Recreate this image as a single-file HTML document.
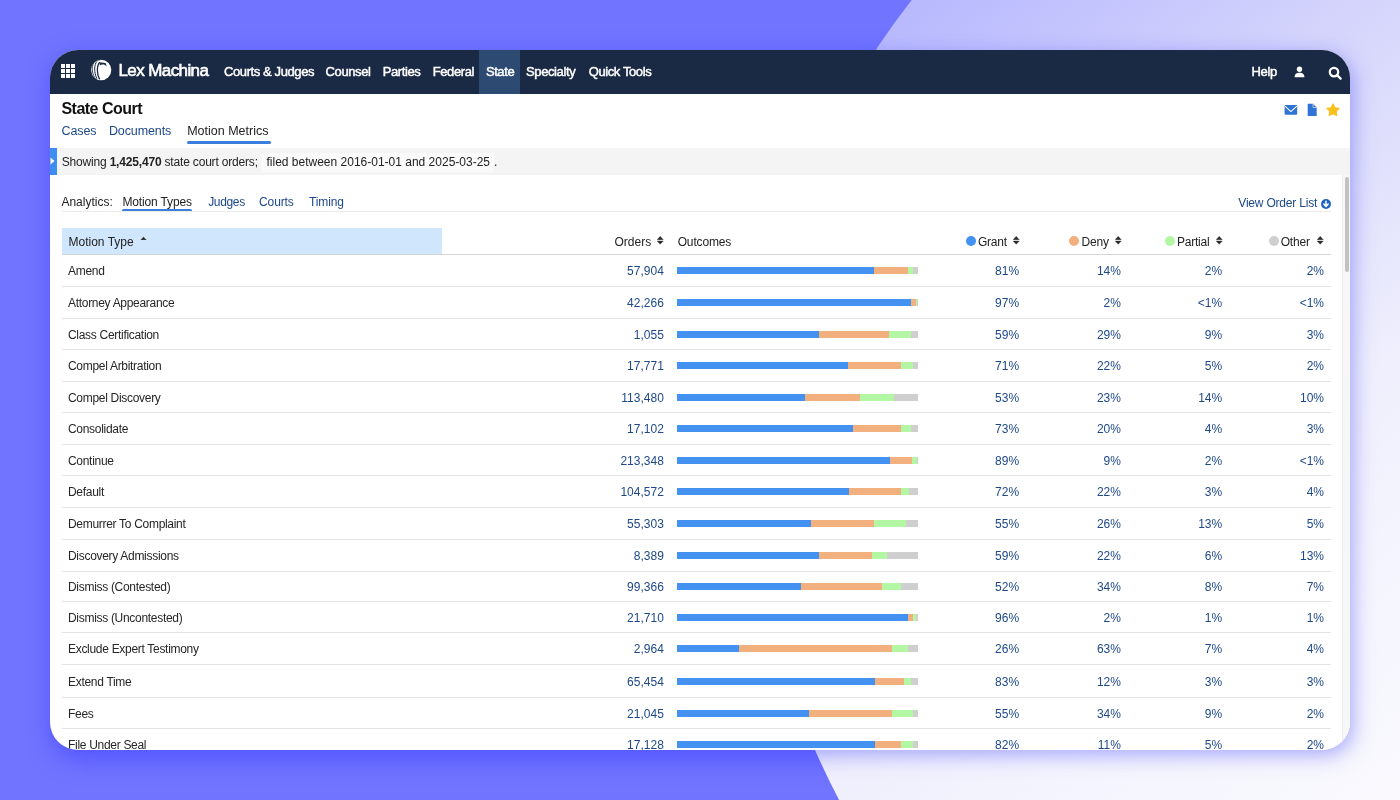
<!DOCTYPE html>
<html><head><meta charset="utf-8"><style>
html,body{margin:0;padding:0;width:1400px;height:800px;overflow:hidden;}
body{background:#7074fe;position:relative;font-family:"Liberation Sans",sans-serif;}
#shA{position:absolute;left:50px;top:50px;width:1300px;height:700px;border-radius:28px;box-shadow:2px 8px 24px rgba(60,62,255,0.6);}
#shB{position:absolute;left:50px;top:50px;width:1300px;height:700px;border-radius:28px;box-shadow:3px 5px 20px rgba(90,90,250,0.5);}
#circ{position:absolute;left:0;top:0;width:1400px;height:800px;clip-path:circle(738px at 1492px 456px);
background:linear-gradient(143deg,#b4b5fe 0%,#b9bafe 38%,#d5d5fc 56%,#efeffd 76%,#f4f4fe 85%,#f9f9fe 100%);}
#win{position:absolute;left:50px;top:50px;width:1300px;height:700px;border-radius:28px;overflow:hidden;background:#fff;will-change:transform;
}
.t{position:absolute;white-space:nowrap;}
.r{position:absolute;}
.bar{position:absolute;height:7px;display:flex;}
.bar i{display:block;height:100%;}
</style></head><body>
<div id="shA"></div>
<div id="circ"><div id="shB"></div></div>
<div id="win">
<div class="r" style="left:0.00px;top:0.00px;width:1300.00px;height:44.00px;background:#1b2a44;"></div>
<div class="r" style="left:429.00px;top:0.00px;width:41.00px;height:44.00px;background:#2c4a72;"></div>
<div class="r" style="left:10.70px;top:13.70px;width:4.20px;height:4.20px;background:#fff;"></div>
<div class="r" style="left:15.82px;top:13.70px;width:4.20px;height:4.20px;background:#fff;"></div>
<div class="r" style="left:20.94px;top:13.70px;width:4.20px;height:4.20px;background:#fff;"></div>
<div class="r" style="left:10.70px;top:18.82px;width:4.20px;height:4.20px;background:#fff;"></div>
<div class="r" style="left:15.82px;top:18.82px;width:4.20px;height:4.20px;background:#fff;"></div>
<div class="r" style="left:20.94px;top:18.82px;width:4.20px;height:4.20px;background:#fff;"></div>
<div class="r" style="left:10.70px;top:23.94px;width:4.20px;height:4.20px;background:#fff;"></div>
<div class="r" style="left:15.82px;top:23.94px;width:4.20px;height:4.20px;background:#fff;"></div>
<div class="r" style="left:20.94px;top:23.94px;width:4.20px;height:4.20px;background:#fff;"></div>
<svg class="r" style="left:36px;top:6px" width="30" height="28" viewBox="0 0 30 28">
<ellipse cx="15.1" cy="14" rx="10.2" ry="10.3" fill="#fff"/>
<path d="M8.6 5.6 C5.6 8.5 5.2 16 8.8 21.8" stroke="#1b2a44" stroke-width="0.9" fill="none"/>
<path d="M11 5.3 C8 8.6 7.8 16.5 11 22.8" stroke="#1b2a44" stroke-width="1" fill="none"/>
<path d="M13.8 6.2 C10.6 9.5 10.6 18 13.6 23.4" stroke="#1b2a44" stroke-width="1.3" fill="none"/>
<path d="M5.6 8.6 C4.2 11 4.3 15.5 5.8 18.5" stroke="#1b2a44" stroke-width="0.7" fill="none"/>
<path d="M13.6 6.6 C15.5 6.2 18 6.4 19.8 7.2 L20.6 10.6 C19.6 9 18.4 8.4 16.8 8.4 C15.6 8.4 14.6 8.9 13.9 9.6 Z" fill="#1b2a44"/>
<path d="M7.5 5.5 C9.5 4.4 12 4 14.5 4.3" stroke="#1b2a44" stroke-width="0.5" fill="none" opacity="0.7"/>
</svg>
<div class="t" style="left:68.50px;top:11.68px;font-size:17px;line-height:17px;font-weight:400;color:#fff;letter-spacing:-0.6px;-webkit-text-stroke:0.6px #fff">Lex Machina</div>
<div class="t" style="left:174.00px;top:14.70px;font-size:13px;line-height:13px;font-weight:400;color:#fff;letter-spacing:-0.4px;-webkit-text-stroke:0.45px #fff">Courts &amp; Judges</div>
<div class="t" style="left:275.60px;top:14.70px;font-size:13px;line-height:13px;font-weight:400;color:#fff;letter-spacing:-0.4px;-webkit-text-stroke:0.45px #fff">Counsel</div>
<div class="t" style="left:332.70px;top:14.70px;font-size:13px;line-height:13px;font-weight:400;color:#fff;letter-spacing:-0.4px;-webkit-text-stroke:0.45px #fff">Parties</div>
<div class="t" style="left:382.70px;top:14.70px;font-size:13px;line-height:13px;font-weight:400;color:#fff;letter-spacing:-0.4px;-webkit-text-stroke:0.45px #fff">Federal</div>
<div class="t" style="left:435.90px;top:14.70px;font-size:13px;line-height:13px;font-weight:400;color:#fff;letter-spacing:-0.4px;-webkit-text-stroke:0.45px #fff">State</div>
<div class="t" style="left:476.10px;top:14.70px;font-size:13px;line-height:13px;font-weight:400;color:#fff;letter-spacing:-0.4px;-webkit-text-stroke:0.45px #fff">Specialty</div>
<div class="t" style="left:538.70px;top:14.70px;font-size:13px;line-height:13px;font-weight:400;color:#fff;letter-spacing:-0.4px;-webkit-text-stroke:0.45px #fff">Quick Tools</div>
<div class="t" style="left:1201.40px;top:14.70px;font-size:13px;line-height:13px;font-weight:400;color:#fff;letter-spacing:-0.3px;-webkit-text-stroke:0.45px #fff">Help</div>
<svg class="r" style="left:1244px;top:16px" width="11" height="12" viewBox="0 0 11 12">
<circle cx="5.5" cy="3.2" r="2.7" fill="#fff"/>
<path d="M0.6 11.3 C0.6 8 2.6 6.8 5.5 6.8 C8.4 6.8 10.4 8 10.4 11.3 Z" fill="#fff"/>
</svg>
<svg class="r" style="left:1278px;top:15.5px" width="15" height="14" viewBox="0 0 15 14">
<circle cx="6" cy="6.1" r="4.2" stroke="#fff" stroke-width="2.3" fill="none"/>
<path d="M9.3 9.4 L12.6 12.6" stroke="#fff" stroke-width="2.3" stroke-linecap="round"/>
</svg>
<div class="t" style="left:11.40px;top:51.01px;font-size:16px;line-height:16px;font-weight:700;color:#111;letter-spacing:-0.5px">State Court</div>
<div class="t" style="left:11.60px;top:74.82px;font-size:12.5px;line-height:12.5px;font-weight:400;color:#1d4889;letter-spacing:-0.1px">Cases</div>
<div class="t" style="left:58.90px;top:74.82px;font-size:12.5px;line-height:12.5px;font-weight:400;color:#1d4889;letter-spacing:-0.1px">Documents</div>
<div class="t" style="left:137.20px;top:74.82px;font-size:12.5px;line-height:12.5px;font-weight:400;color:#222;letter-spacing:0px">Motion Metrics</div>
<div class="r" style="left:137.00px;top:90.80px;width:84.00px;height:2.80px;background:#3a7fde;border-radius:1.5px"></div>
<svg class="r" style="left:1234px;top:54px" width="14" height="12" viewBox="0 0 14 12">
<rect x="0.6" y="1" width="12.6" height="9.8" rx="1.2" fill="#2f73d6"/>
<path d="M0.9 2.2 L6.9 7.6 L12.9 2.2" stroke="#fff" stroke-width="1.1" fill="none"/>
</svg>
<svg class="r" style="left:1256.5px;top:53px" width="10" height="13" viewBox="0 0 10 13">
<path d="M0.7 0.8 H6.3 L9.7 4.2 V12.9 H0.7 Z" fill="#2f73d6"/>
<path d="M6.1 0.8 V4.4 H9.7 Z" fill="#1d4f9e" stroke="#fff" stroke-width="0.7"/>
</svg>
<svg class="r" style="left:1276px;top:52.5px" width="14" height="14" viewBox="0 0 24 24">
<path d="M12.00 1.60 L15.29 8.07 L22.46 9.20 L17.33 14.33 L18.47 21.50 L12.00 18.20 L5.53 21.50 L6.67 14.33 L1.54 9.20 L8.71 8.07 Z" fill="#fbc01c" stroke="#fbc01c" stroke-width="2" stroke-linejoin="round"/>
</svg>
<div class="r" style="left:0.00px;top:98.00px;width:1300.00px;height:26.60px;background:#f4f4f4;"></div>
<div class="r" style="left:0.00px;top:98.00px;width:7.00px;height:26.60px;background:#3d8ef0;"></div>
<svg class="r" style="left:0px;top:106px" width="7" height="10" viewBox="0 0 7 10"><path d="M0.5 1.5 L4.5 5 L0.5 8.5 Z" fill="#fff"/></svg>
<div class="t" style="left:11.70px;top:106.03px;font-size:12px;line-height:12px;font-weight:400;color:#222;letter-spacing:-0.18px">Showing <b>1,425,470</b> state court orders;</div>
<div class="r" style="left:211.00px;top:102.50px;width:233.00px;height:19.80px;background:#fafafa;border-radius:2px"></div>
<div class="t" style="left:216.50px;top:106.03px;font-size:12px;line-height:12px;font-weight:400;color:#222;">filed between 2016-01-01 and 2025-03-25</div>
<div class="t" style="left:444.00px;top:106.03px;font-size:12px;line-height:12px;font-weight:400;color:#222;">.</div>
<div class="t" style="left:11.40px;top:146.03px;font-size:12px;line-height:12px;font-weight:400;color:#222;">Analytics:</div>
<div class="t" style="left:72.50px;top:146.03px;font-size:12px;line-height:12px;font-weight:400;color:#222;letter-spacing:-0.15px">Motion Types</div>
<div class="r" style="left:72.20px;top:159.00px;width:70.00px;height:2.70px;background:#3a7fde;border-radius:1.5px"></div>
<div class="t" style="left:158.20px;top:146.03px;font-size:12px;line-height:12px;font-weight:400;color:#1d4889;letter-spacing:-0.35px">Judges</div>
<div class="t" style="left:209.00px;top:146.03px;font-size:12px;line-height:12px;font-weight:400;color:#1d4889;letter-spacing:-0.1px">Courts</div>
<div class="t" style="left:258.90px;top:146.03px;font-size:12px;line-height:12px;font-weight:400;color:#1d4889;letter-spacing:-0.1px">Timing</div>
<div class="r" style="left:11.00px;top:161.00px;width:1270.00px;height:1.00px;background:#ebebeb;"></div>
<div class="t" style="left:1188.30px;top:147.13px;font-size:12px;line-height:12px;font-weight:400;color:#1d4889;letter-spacing:-0.2px">View Order List</div>
<svg class="r" style="left:1270.5px;top:148.5px" width="10" height="10" viewBox="0 0 10 10">
<circle cx="5" cy="5" r="5" fill="#1f62c4"/>
<path d="M5 2.2 V7.2 M2.8 5 L5 7.4 L7.2 5" stroke="#fff" stroke-width="1.5" fill="none" stroke-linecap="round" stroke-linejoin="round"/>
</svg>
<div class="r" style="left:11.50px;top:178.00px;width:380.50px;height:26.00px;background:#d0e6fd;"></div>
<div class="t" style="left:18.50px;top:185.73px;font-size:12px;line-height:12px;font-weight:400;color:#222;">Motion Type</div>
<svg class="r" style="left:89.5px;top:186px" width="7" height="5" viewBox="0 0 7 5"><path d="M0.5 4 L3.5 0.8 L6.5 4 Z" fill="#333"/></svg>
<div class="t" style="right:698.80px;top:185.73px;font-size:12px;line-height:12px;font-weight:400;color:#222;">Orders</div>
<svg class="r" style="left:607px;top:186.3px" width="7" height="9" viewBox="0 0 7 9"><path d="M0.1 3.7 L3.2 0.3 L6.3 3.7 Z M0.1 5.1 L3.2 8.3 L6.3 5.1 Z" fill="#2a2a2a" stroke="#2a2a2a" stroke-width="0.3" stroke-linejoin="round"/></svg>
<div class="t" style="left:627.70px;top:185.73px;font-size:12px;line-height:12px;font-weight:400;color:#222;letter-spacing:-0.15px">Outcomes</div>
<div class="r" style="left:915.50px;top:186.00px;width:10.20px;height:10.20px;background:#4392f1;border-radius:50%"></div>
<div class="t" style="left:927.90px;top:185.73px;font-size:12px;line-height:12px;font-weight:400;color:#222;letter-spacing:-0.2px">Grant</div>
<svg class="r" style="left:962.5px;top:186.3px" width="7" height="9" viewBox="0 0 7 9"><path d="M0.1 3.7 L3.2 0.3 L6.3 3.7 Z M0.1 5.1 L3.2 8.3 L6.3 5.1 Z" fill="#2a2a2a" stroke="#2a2a2a" stroke-width="0.3" stroke-linejoin="round"/></svg>
<div class="r" style="left:1019.00px;top:186.00px;width:10.20px;height:10.20px;background:#f3b07f;border-radius:50%"></div>
<div class="t" style="left:1031.60px;top:185.73px;font-size:12px;line-height:12px;font-weight:400;color:#222;letter-spacing:-0.2px">Deny</div>
<svg class="r" style="left:1064.5px;top:186.3px" width="7" height="9" viewBox="0 0 7 9"><path d="M0.1 3.7 L3.2 0.3 L6.3 3.7 Z M0.1 5.1 L3.2 8.3 L6.3 5.1 Z" fill="#2a2a2a" stroke="#2a2a2a" stroke-width="0.3" stroke-linejoin="round"/></svg>
<div class="r" style="left:1114.60px;top:186.00px;width:10.20px;height:10.20px;background:#b3f7a4;border-radius:50%"></div>
<div class="t" style="left:1126.90px;top:185.73px;font-size:12px;line-height:12px;font-weight:400;color:#222;letter-spacing:-0.2px">Partial</div>
<svg class="r" style="left:1165.5px;top:186.3px" width="7" height="9" viewBox="0 0 7 9"><path d="M0.1 3.7 L3.2 0.3 L6.3 3.7 Z M0.1 5.1 L3.2 8.3 L6.3 5.1 Z" fill="#2a2a2a" stroke="#2a2a2a" stroke-width="0.3" stroke-linejoin="round"/></svg>
<div class="r" style="left:1218.80px;top:186.00px;width:10.20px;height:10.20px;background:#cfcfcf;border-radius:50%"></div>
<div class="t" style="left:1230.70px;top:185.73px;font-size:12px;line-height:12px;font-weight:400;color:#222;letter-spacing:-0.2px">Other</div>
<svg class="r" style="left:1267px;top:186.3px" width="7" height="9" viewBox="0 0 7 9"><path d="M0.1 3.7 L3.2 0.3 L6.3 3.7 Z M0.1 5.1 L3.2 8.3 L6.3 5.1 Z" fill="#2a2a2a" stroke="#2a2a2a" stroke-width="0.3" stroke-linejoin="round"/></svg>
<div class="r" style="left:11.50px;top:204.00px;width:1269.50px;height:1.00px;background:#d5d5d5;"></div>
<div class="t" style="left:18.00px;top:215.43px;font-size:12px;line-height:12px;font-weight:400;color:#262626;letter-spacing:-0.3px">Amend</div>
<div class="t" style="right:686.20px;top:215.43px;font-size:12px;line-height:12px;font-weight:400;color:#1d4889;">57,904</div>
<div class="bar" style="left:626.70px;top:217.00px;width:241.4px"><i style="width:197.51px;background:#4392f1"></i><i style="width:34.14px;background:#f3b07f"></i><i style="width:4.88px;background:#b3f7a4"></i><i style="width:4.88px;background:#cfcfcf"></i></div>
<div class="t" style="right:330.90px;top:215.43px;font-size:12px;line-height:12px;font-weight:400;color:#1d4889;">81%</div>
<div class="t" style="right:229.10px;top:215.43px;font-size:12px;line-height:12px;font-weight:400;color:#1d4889;">14%</div>
<div class="t" style="right:127.80px;top:215.43px;font-size:12px;line-height:12px;font-weight:400;color:#1d4889;">2%</div>
<div class="t" style="right:26.00px;top:215.43px;font-size:12px;line-height:12px;font-weight:400;color:#1d4889;">2%</div>
<div class="r" style="left:11.50px;top:236.00px;width:1269.50px;height:1.00px;background:#e3e3e3;"></div>
<div class="t" style="left:18.00px;top:247.43px;font-size:12px;line-height:12px;font-weight:400;color:#262626;letter-spacing:-0.3px">Attorney Appearance</div>
<div class="t" style="right:686.20px;top:247.43px;font-size:12px;line-height:12px;font-weight:400;color:#1d4889;">42,266</div>
<div class="bar" style="left:626.70px;top:249.00px;width:241.4px"><i style="width:234.16px;background:#4392f1"></i><i style="width:4.83px;background:#f3b07f"></i><i style="width:1.21px;background:#b3f7a4"></i><i style="width:1.21px;background:#cfcfcf"></i></div>
<div class="t" style="right:330.90px;top:247.43px;font-size:12px;line-height:12px;font-weight:400;color:#1d4889;">97%</div>
<div class="t" style="right:229.10px;top:247.43px;font-size:12px;line-height:12px;font-weight:400;color:#1d4889;">2%</div>
<div class="t" style="right:127.80px;top:247.43px;font-size:12px;line-height:12px;font-weight:400;color:#1d4889;">&lt;1%</div>
<div class="t" style="right:26.00px;top:247.43px;font-size:12px;line-height:12px;font-weight:400;color:#1d4889;">&lt;1%</div>
<div class="r" style="left:11.50px;top:268.00px;width:1269.50px;height:1.00px;background:#e3e3e3;"></div>
<div class="t" style="left:18.00px;top:278.93px;font-size:12px;line-height:12px;font-weight:400;color:#262626;letter-spacing:-0.3px">Class Certification</div>
<div class="t" style="right:686.20px;top:278.93px;font-size:12px;line-height:12px;font-weight:400;color:#1d4889;">1,055</div>
<div class="bar" style="left:626.70px;top:280.50px;width:241.4px"><i style="width:142.43px;background:#4392f1"></i><i style="width:70.01px;background:#f3b07f"></i><i style="width:21.73px;background:#b3f7a4"></i><i style="width:7.24px;background:#cfcfcf"></i></div>
<div class="t" style="right:330.90px;top:278.93px;font-size:12px;line-height:12px;font-weight:400;color:#1d4889;">59%</div>
<div class="t" style="right:229.10px;top:278.93px;font-size:12px;line-height:12px;font-weight:400;color:#1d4889;">29%</div>
<div class="t" style="right:127.80px;top:278.93px;font-size:12px;line-height:12px;font-weight:400;color:#1d4889;">9%</div>
<div class="t" style="right:26.00px;top:278.93px;font-size:12px;line-height:12px;font-weight:400;color:#1d4889;">3%</div>
<div class="r" style="left:11.50px;top:299.00px;width:1269.50px;height:1.00px;background:#e3e3e3;"></div>
<div class="t" style="left:18.00px;top:310.43px;font-size:12px;line-height:12px;font-weight:400;color:#262626;letter-spacing:-0.3px">Compel Arbitration</div>
<div class="t" style="right:686.20px;top:310.43px;font-size:12px;line-height:12px;font-weight:400;color:#1d4889;">17,771</div>
<div class="bar" style="left:626.70px;top:312.00px;width:241.4px"><i style="width:171.39px;background:#4392f1"></i><i style="width:53.11px;background:#f3b07f"></i><i style="width:12.07px;background:#b3f7a4"></i><i style="width:4.83px;background:#cfcfcf"></i></div>
<div class="t" style="right:330.90px;top:310.43px;font-size:12px;line-height:12px;font-weight:400;color:#1d4889;">71%</div>
<div class="t" style="right:229.10px;top:310.43px;font-size:12px;line-height:12px;font-weight:400;color:#1d4889;">22%</div>
<div class="t" style="right:127.80px;top:310.43px;font-size:12px;line-height:12px;font-weight:400;color:#1d4889;">5%</div>
<div class="t" style="right:26.00px;top:310.43px;font-size:12px;line-height:12px;font-weight:400;color:#1d4889;">2%</div>
<div class="r" style="left:11.50px;top:331.00px;width:1269.50px;height:1.00px;background:#e3e3e3;"></div>
<div class="t" style="left:18.00px;top:341.93px;font-size:12px;line-height:12px;font-weight:400;color:#262626;letter-spacing:-0.3px">Compel Discovery</div>
<div class="t" style="right:686.20px;top:341.93px;font-size:12px;line-height:12px;font-weight:400;color:#1d4889;">113,480</div>
<div class="bar" style="left:626.70px;top:343.50px;width:241.4px"><i style="width:127.94px;background:#4392f1"></i><i style="width:55.52px;background:#f3b07f"></i><i style="width:33.80px;background:#b3f7a4"></i><i style="width:24.14px;background:#cfcfcf"></i></div>
<div class="t" style="right:330.90px;top:341.93px;font-size:12px;line-height:12px;font-weight:400;color:#1d4889;">53%</div>
<div class="t" style="right:229.10px;top:341.93px;font-size:12px;line-height:12px;font-weight:400;color:#1d4889;">23%</div>
<div class="t" style="right:127.80px;top:341.93px;font-size:12px;line-height:12px;font-weight:400;color:#1d4889;">14%</div>
<div class="t" style="right:26.00px;top:341.93px;font-size:12px;line-height:12px;font-weight:400;color:#1d4889;">10%</div>
<div class="r" style="left:11.50px;top:362.00px;width:1269.50px;height:1.00px;background:#e3e3e3;"></div>
<div class="t" style="left:18.00px;top:373.43px;font-size:12px;line-height:12px;font-weight:400;color:#262626;letter-spacing:-0.3px">Consolidate</div>
<div class="t" style="right:686.20px;top:373.43px;font-size:12px;line-height:12px;font-weight:400;color:#1d4889;">17,102</div>
<div class="bar" style="left:626.70px;top:375.00px;width:241.4px"><i style="width:176.22px;background:#4392f1"></i><i style="width:48.28px;background:#f3b07f"></i><i style="width:9.66px;background:#b3f7a4"></i><i style="width:7.24px;background:#cfcfcf"></i></div>
<div class="t" style="right:330.90px;top:373.43px;font-size:12px;line-height:12px;font-weight:400;color:#1d4889;">73%</div>
<div class="t" style="right:229.10px;top:373.43px;font-size:12px;line-height:12px;font-weight:400;color:#1d4889;">20%</div>
<div class="t" style="right:127.80px;top:373.43px;font-size:12px;line-height:12px;font-weight:400;color:#1d4889;">4%</div>
<div class="t" style="right:26.00px;top:373.43px;font-size:12px;line-height:12px;font-weight:400;color:#1d4889;">3%</div>
<div class="r" style="left:11.50px;top:394.00px;width:1269.50px;height:1.00px;background:#e3e3e3;"></div>
<div class="t" style="left:18.00px;top:404.93px;font-size:12px;line-height:12px;font-weight:400;color:#262626;letter-spacing:-0.3px">Continue</div>
<div class="t" style="right:686.20px;top:404.93px;font-size:12px;line-height:12px;font-weight:400;color:#1d4889;">213,348</div>
<div class="bar" style="left:626.70px;top:406.50px;width:241.4px"><i style="width:213.78px;background:#4392f1"></i><i style="width:21.62px;background:#f3b07f"></i><i style="width:4.80px;background:#b3f7a4"></i><i style="width:1.20px;background:#cfcfcf"></i></div>
<div class="t" style="right:330.90px;top:404.93px;font-size:12px;line-height:12px;font-weight:400;color:#1d4889;">89%</div>
<div class="t" style="right:229.10px;top:404.93px;font-size:12px;line-height:12px;font-weight:400;color:#1d4889;">9%</div>
<div class="t" style="right:127.80px;top:404.93px;font-size:12px;line-height:12px;font-weight:400;color:#1d4889;">2%</div>
<div class="t" style="right:26.00px;top:404.93px;font-size:12px;line-height:12px;font-weight:400;color:#1d4889;">&lt;1%</div>
<div class="r" style="left:11.50px;top:425.00px;width:1269.50px;height:1.00px;background:#e3e3e3;"></div>
<div class="t" style="left:18.00px;top:436.43px;font-size:12px;line-height:12px;font-weight:400;color:#262626;letter-spacing:-0.3px">Default</div>
<div class="t" style="right:686.20px;top:436.43px;font-size:12px;line-height:12px;font-weight:400;color:#1d4889;">104,572</div>
<div class="bar" style="left:626.70px;top:438.00px;width:241.4px"><i style="width:172.09px;background:#4392f1"></i><i style="width:52.58px;background:#f3b07f"></i><i style="width:7.17px;background:#b3f7a4"></i><i style="width:9.56px;background:#cfcfcf"></i></div>
<div class="t" style="right:330.90px;top:436.43px;font-size:12px;line-height:12px;font-weight:400;color:#1d4889;">72%</div>
<div class="t" style="right:229.10px;top:436.43px;font-size:12px;line-height:12px;font-weight:400;color:#1d4889;">22%</div>
<div class="t" style="right:127.80px;top:436.43px;font-size:12px;line-height:12px;font-weight:400;color:#1d4889;">3%</div>
<div class="t" style="right:26.00px;top:436.43px;font-size:12px;line-height:12px;font-weight:400;color:#1d4889;">4%</div>
<div class="r" style="left:11.50px;top:457.00px;width:1269.50px;height:1.00px;background:#e3e3e3;"></div>
<div class="t" style="left:18.00px;top:468.43px;font-size:12px;line-height:12px;font-weight:400;color:#262626;letter-spacing:-0.3px">Demurrer To Complaint</div>
<div class="t" style="right:686.20px;top:468.43px;font-size:12px;line-height:12px;font-weight:400;color:#1d4889;">55,303</div>
<div class="bar" style="left:626.70px;top:470.00px;width:241.4px"><i style="width:134.11px;background:#4392f1"></i><i style="width:63.40px;background:#f3b07f"></i><i style="width:31.70px;background:#b3f7a4"></i><i style="width:12.19px;background:#cfcfcf"></i></div>
<div class="t" style="right:330.90px;top:468.43px;font-size:12px;line-height:12px;font-weight:400;color:#1d4889;">55%</div>
<div class="t" style="right:229.10px;top:468.43px;font-size:12px;line-height:12px;font-weight:400;color:#1d4889;">26%</div>
<div class="t" style="right:127.80px;top:468.43px;font-size:12px;line-height:12px;font-weight:400;color:#1d4889;">13%</div>
<div class="t" style="right:26.00px;top:468.43px;font-size:12px;line-height:12px;font-weight:400;color:#1d4889;">5%</div>
<div class="r" style="left:11.50px;top:489.00px;width:1269.50px;height:1.00px;background:#e3e3e3;"></div>
<div class="t" style="left:18.00px;top:500.43px;font-size:12px;line-height:12px;font-weight:400;color:#262626;letter-spacing:-0.3px">Discovery Admissions</div>
<div class="t" style="right:686.20px;top:500.43px;font-size:12px;line-height:12px;font-weight:400;color:#1d4889;">8,389</div>
<div class="bar" style="left:626.70px;top:502.00px;width:241.4px"><i style="width:142.43px;background:#4392f1"></i><i style="width:53.11px;background:#f3b07f"></i><i style="width:14.48px;background:#b3f7a4"></i><i style="width:31.38px;background:#cfcfcf"></i></div>
<div class="t" style="right:330.90px;top:500.43px;font-size:12px;line-height:12px;font-weight:400;color:#1d4889;">59%</div>
<div class="t" style="right:229.10px;top:500.43px;font-size:12px;line-height:12px;font-weight:400;color:#1d4889;">22%</div>
<div class="t" style="right:127.80px;top:500.43px;font-size:12px;line-height:12px;font-weight:400;color:#1d4889;">6%</div>
<div class="t" style="right:26.00px;top:500.43px;font-size:12px;line-height:12px;font-weight:400;color:#1d4889;">13%</div>
<div class="r" style="left:11.50px;top:521.00px;width:1269.50px;height:1.00px;background:#e3e3e3;"></div>
<div class="t" style="left:18.00px;top:531.43px;font-size:12px;line-height:12px;font-weight:400;color:#262626;letter-spacing:-0.3px">Dismiss (Contested)</div>
<div class="t" style="right:686.20px;top:531.43px;font-size:12px;line-height:12px;font-weight:400;color:#1d4889;">99,366</div>
<div class="bar" style="left:626.70px;top:533.00px;width:241.4px"><i style="width:124.29px;background:#4392f1"></i><i style="width:81.26px;background:#f3b07f"></i><i style="width:19.12px;background:#b3f7a4"></i><i style="width:16.73px;background:#cfcfcf"></i></div>
<div class="t" style="right:330.90px;top:531.43px;font-size:12px;line-height:12px;font-weight:400;color:#1d4889;">52%</div>
<div class="t" style="right:229.10px;top:531.43px;font-size:12px;line-height:12px;font-weight:400;color:#1d4889;">34%</div>
<div class="t" style="right:127.80px;top:531.43px;font-size:12px;line-height:12px;font-weight:400;color:#1d4889;">8%</div>
<div class="t" style="right:26.00px;top:531.43px;font-size:12px;line-height:12px;font-weight:400;color:#1d4889;">7%</div>
<div class="r" style="left:11.50px;top:551.00px;width:1269.50px;height:1.00px;background:#e3e3e3;"></div>
<div class="t" style="left:18.00px;top:561.93px;font-size:12px;line-height:12px;font-weight:400;color:#262626;letter-spacing:-0.3px">Dismiss (Uncontested)</div>
<div class="t" style="right:686.20px;top:561.93px;font-size:12px;line-height:12px;font-weight:400;color:#1d4889;">21,710</div>
<div class="bar" style="left:626.70px;top:563.50px;width:241.4px"><i style="width:231.74px;background:#4392f1"></i><i style="width:4.83px;background:#f3b07f"></i><i style="width:2.41px;background:#b3f7a4"></i><i style="width:2.41px;background:#cfcfcf"></i></div>
<div class="t" style="right:330.90px;top:561.93px;font-size:12px;line-height:12px;font-weight:400;color:#1d4889;">96%</div>
<div class="t" style="right:229.10px;top:561.93px;font-size:12px;line-height:12px;font-weight:400;color:#1d4889;">2%</div>
<div class="t" style="right:127.80px;top:561.93px;font-size:12px;line-height:12px;font-weight:400;color:#1d4889;">1%</div>
<div class="t" style="right:26.00px;top:561.93px;font-size:12px;line-height:12px;font-weight:400;color:#1d4889;">1%</div>
<div class="r" style="left:11.50px;top:582.00px;width:1269.50px;height:1.00px;background:#e3e3e3;"></div>
<div class="t" style="left:18.00px;top:593.43px;font-size:12px;line-height:12px;font-weight:400;color:#262626;letter-spacing:-0.3px">Exclude Expert Testimony</div>
<div class="t" style="right:686.20px;top:593.43px;font-size:12px;line-height:12px;font-weight:400;color:#1d4889;">2,964</div>
<div class="bar" style="left:626.70px;top:595.00px;width:241.4px"><i style="width:62.76px;background:#4392f1"></i><i style="width:152.08px;background:#f3b07f"></i><i style="width:16.90px;background:#b3f7a4"></i><i style="width:9.66px;background:#cfcfcf"></i></div>
<div class="t" style="right:330.90px;top:593.43px;font-size:12px;line-height:12px;font-weight:400;color:#1d4889;">26%</div>
<div class="t" style="right:229.10px;top:593.43px;font-size:12px;line-height:12px;font-weight:400;color:#1d4889;">63%</div>
<div class="t" style="right:127.80px;top:593.43px;font-size:12px;line-height:12px;font-weight:400;color:#1d4889;">7%</div>
<div class="t" style="right:26.00px;top:593.43px;font-size:12px;line-height:12px;font-weight:400;color:#1d4889;">4%</div>
<div class="r" style="left:11.50px;top:614.00px;width:1269.50px;height:1.00px;background:#e3e3e3;"></div>
<div class="t" style="left:18.00px;top:625.93px;font-size:12px;line-height:12px;font-weight:400;color:#262626;letter-spacing:-0.3px">Extend Time</div>
<div class="t" style="right:686.20px;top:625.93px;font-size:12px;line-height:12px;font-weight:400;color:#1d4889;">65,454</div>
<div class="bar" style="left:626.70px;top:627.50px;width:241.4px"><i style="width:198.38px;background:#4392f1"></i><i style="width:28.68px;background:#f3b07f"></i><i style="width:7.17px;background:#b3f7a4"></i><i style="width:7.17px;background:#cfcfcf"></i></div>
<div class="t" style="right:330.90px;top:625.93px;font-size:12px;line-height:12px;font-weight:400;color:#1d4889;">83%</div>
<div class="t" style="right:229.10px;top:625.93px;font-size:12px;line-height:12px;font-weight:400;color:#1d4889;">12%</div>
<div class="t" style="right:127.80px;top:625.93px;font-size:12px;line-height:12px;font-weight:400;color:#1d4889;">3%</div>
<div class="t" style="right:26.00px;top:625.93px;font-size:12px;line-height:12px;font-weight:400;color:#1d4889;">3%</div>
<div class="r" style="left:11.50px;top:647.00px;width:1269.50px;height:1.00px;background:#e3e3e3;"></div>
<div class="t" style="left:18.00px;top:657.93px;font-size:12px;line-height:12px;font-weight:400;color:#262626;letter-spacing:-0.3px">Fees</div>
<div class="t" style="right:686.20px;top:657.93px;font-size:12px;line-height:12px;font-weight:400;color:#1d4889;">21,045</div>
<div class="bar" style="left:626.70px;top:659.50px;width:241.4px"><i style="width:132.77px;background:#4392f1"></i><i style="width:82.08px;background:#f3b07f"></i><i style="width:21.73px;background:#b3f7a4"></i><i style="width:4.83px;background:#cfcfcf"></i></div>
<div class="t" style="right:330.90px;top:657.93px;font-size:12px;line-height:12px;font-weight:400;color:#1d4889;">55%</div>
<div class="t" style="right:229.10px;top:657.93px;font-size:12px;line-height:12px;font-weight:400;color:#1d4889;">34%</div>
<div class="t" style="right:127.80px;top:657.93px;font-size:12px;line-height:12px;font-weight:400;color:#1d4889;">9%</div>
<div class="t" style="right:26.00px;top:657.93px;font-size:12px;line-height:12px;font-weight:400;color:#1d4889;">2%</div>
<div class="r" style="left:11.50px;top:678.00px;width:1269.50px;height:1.00px;background:#e3e3e3;"></div>
<div class="t" style="left:18.00px;top:688.93px;font-size:12px;line-height:12px;font-weight:400;color:#262626;letter-spacing:-0.3px">File Under Seal</div>
<div class="t" style="right:686.20px;top:688.93px;font-size:12px;line-height:12px;font-weight:400;color:#1d4889;">17,128</div>
<div class="bar" style="left:626.70px;top:690.50px;width:241.4px"><i style="width:197.95px;background:#4392f1"></i><i style="width:26.55px;background:#f3b07f"></i><i style="width:12.07px;background:#b3f7a4"></i><i style="width:4.83px;background:#cfcfcf"></i></div>
<div class="t" style="right:330.90px;top:688.93px;font-size:12px;line-height:12px;font-weight:400;color:#1d4889;">82%</div>
<div class="t" style="right:229.10px;top:688.93px;font-size:12px;line-height:12px;font-weight:400;color:#1d4889;">11%</div>
<div class="t" style="right:127.80px;top:688.93px;font-size:12px;line-height:12px;font-weight:400;color:#1d4889;">5%</div>
<div class="t" style="right:26.00px;top:688.93px;font-size:12px;line-height:12px;font-weight:400;color:#1d4889;">2%</div>
<div class="r" style="left:1292.00px;top:125.00px;width:8.00px;height:575.00px;background:#f7f7f7;border-left:1px solid #ededed;box-sizing:border-box"></div>
<div class="r" style="left:1294.80px;top:127.00px;width:4.60px;height:95.00px;background:#c2c2c2;border-radius:3px"></div>
</div>
</body></html>
